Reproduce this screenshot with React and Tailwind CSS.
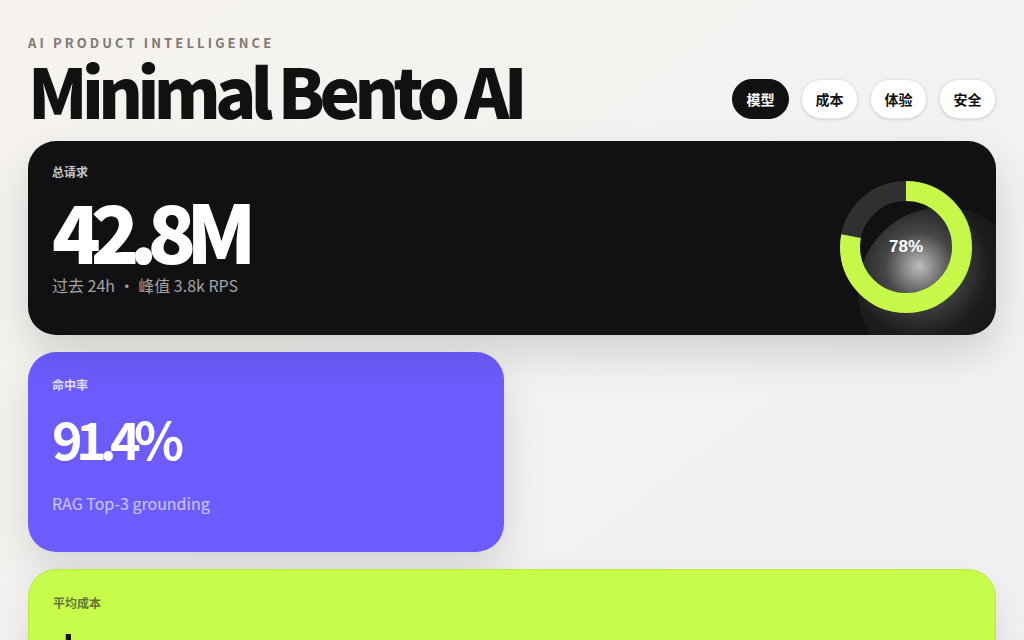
import React from "react";

const tabs = ["模型", "成本", "体验", "安全"];

function Donut({ value }) {
  const r = 56;
  const c = 2 * Math.PI * r;
  return (
    <div className="relative z-10 h-[132px] w-[132px] shrink-0 self-end">
      <svg viewBox="0 0 132 132" className="h-full w-full -rotate-90">
        <circle cx="66" cy="66" r={r} fill="none" stroke="#303032" strokeWidth="20" />
        <circle
          cx="66"
          cy="66"
          r={r}
          fill="none"
          stroke="#c6f84a"
          strokeWidth="20"
          strokeDasharray={`${(c * value) / 100} ${c}`}
        />
      </svg>
      <div className="absolute inset-0 flex items-center justify-center font-['Liberation_Sans',Arial,sans-serif] text-[17px] font-bold text-white">
        {value}%
      </div>
    </div>
  );
}

export default function App() {
  return (
    <div className="min-h-screen bg-gradient-to-br from-[#f6f3ee] via-[#f3f2f0] to-[#f1f0f3] px-7 pt-[33px] font-['Noto_Sans_CJK_SC','Noto_Sans',sans-serif] text-[#111]">
      {/* Header */}
      <header className="flex items-end justify-between">
        <div>
          <p className="text-[13px] font-bold uppercase leading-[19px] tracking-[0.24em] text-[#7d7873]">
            AI Product Intelligence
          </p>
          <h1 className="mt-1 text-[68px] font-black leading-none tracking-[-0.082em] text-[#111]">
            Minimal Bento AI
          </h1>
        </div>
        <nav className="mb-[5px] flex gap-3">
          {tabs.map((t, i) => (
            <button
              key={t}
              className={
                i === 0
                  ? "flex h-10 w-[57px] items-center justify-center rounded-full border border-[#111] bg-[#111] text-sm font-bold text-white"
                  : "flex h-10 w-[57px] items-center justify-center rounded-full border border-[#e6e4e1] bg-white text-sm font-bold text-[#111] shadow-sm"
              }
            >
              {t}
            </button>
          ))}
        </nav>
      </header>

      {/* Bento grid */}
      <main className="mt-[17px] grid grid-cols-2 gap-x-4 gap-y-[17px]">
        <section className="relative col-span-2 flex h-[194px] justify-between overflow-hidden rounded-[28px] bg-[#111113] px-6 py-[22px] shadow-[0_18px_40px_rgba(0,0,0,0.14)]">
          <div className="relative z-10">
            <p className="text-xs font-bold leading-[18px] text-[#c4c4c4]">总请求</p>
            <p className="mt-2 text-[80px] font-black leading-none tracking-[-0.125em] text-white">42.8M</p>
            <p className="mt-1 text-base leading-6 text-[#a3a3a3]">过去 24h • 峰值 3.8k RPS</p>
          </div>
          <div className="absolute right-[-32px] top-[66px] h-[170px] w-[170px] rounded-full bg-[radial-gradient(circle_at_36%_35%,rgba(255,255,255,0.72)_0%,rgba(150,150,150,0.4)_22%,rgba(70,70,70,0.22)_45%,rgba(40,40,40,0.12)_75%,rgba(30,30,30,0.08)_100%)]" />
          <Donut value={78} />
        </section>

        <section className="flex h-[200px] flex-col rounded-[28px] bg-[#6c5cfd] px-6 pt-6 shadow-[0_18px_40px_rgba(0,0,0,0.12)]">
          <p className="text-xs font-bold leading-[18px] text-white/80">命中率</p>
          <p className="mt-[18px] text-[52px] font-bold leading-none tracking-[-0.13em] text-white">91.4%</p>
          <p className="mt-[27px] text-base leading-6 text-white/65">RAG Top-3 grounding</p>
        </section>
        <div />

        <section className="col-span-2 flex h-[200px] flex-col rounded-[28px] border border-[#b9ea3d] bg-[#c8fc4b] px-6 pt-6 shadow-[0_18px_40px_rgba(0,0,0,0.1)]">
          <p className="text-xs font-bold leading-[18px] text-[#66753a]">平均成本</p>
          <p className="mt-[18px] text-[52px] font-bold leading-none tracking-[-0.13em] text-[#111]">$0.0021</p>
          <p className="mt-6 text-base leading-6 text-black/55">每次请求 · 含检索</p>
        </section>
      </main>
    </div>
  );
}
